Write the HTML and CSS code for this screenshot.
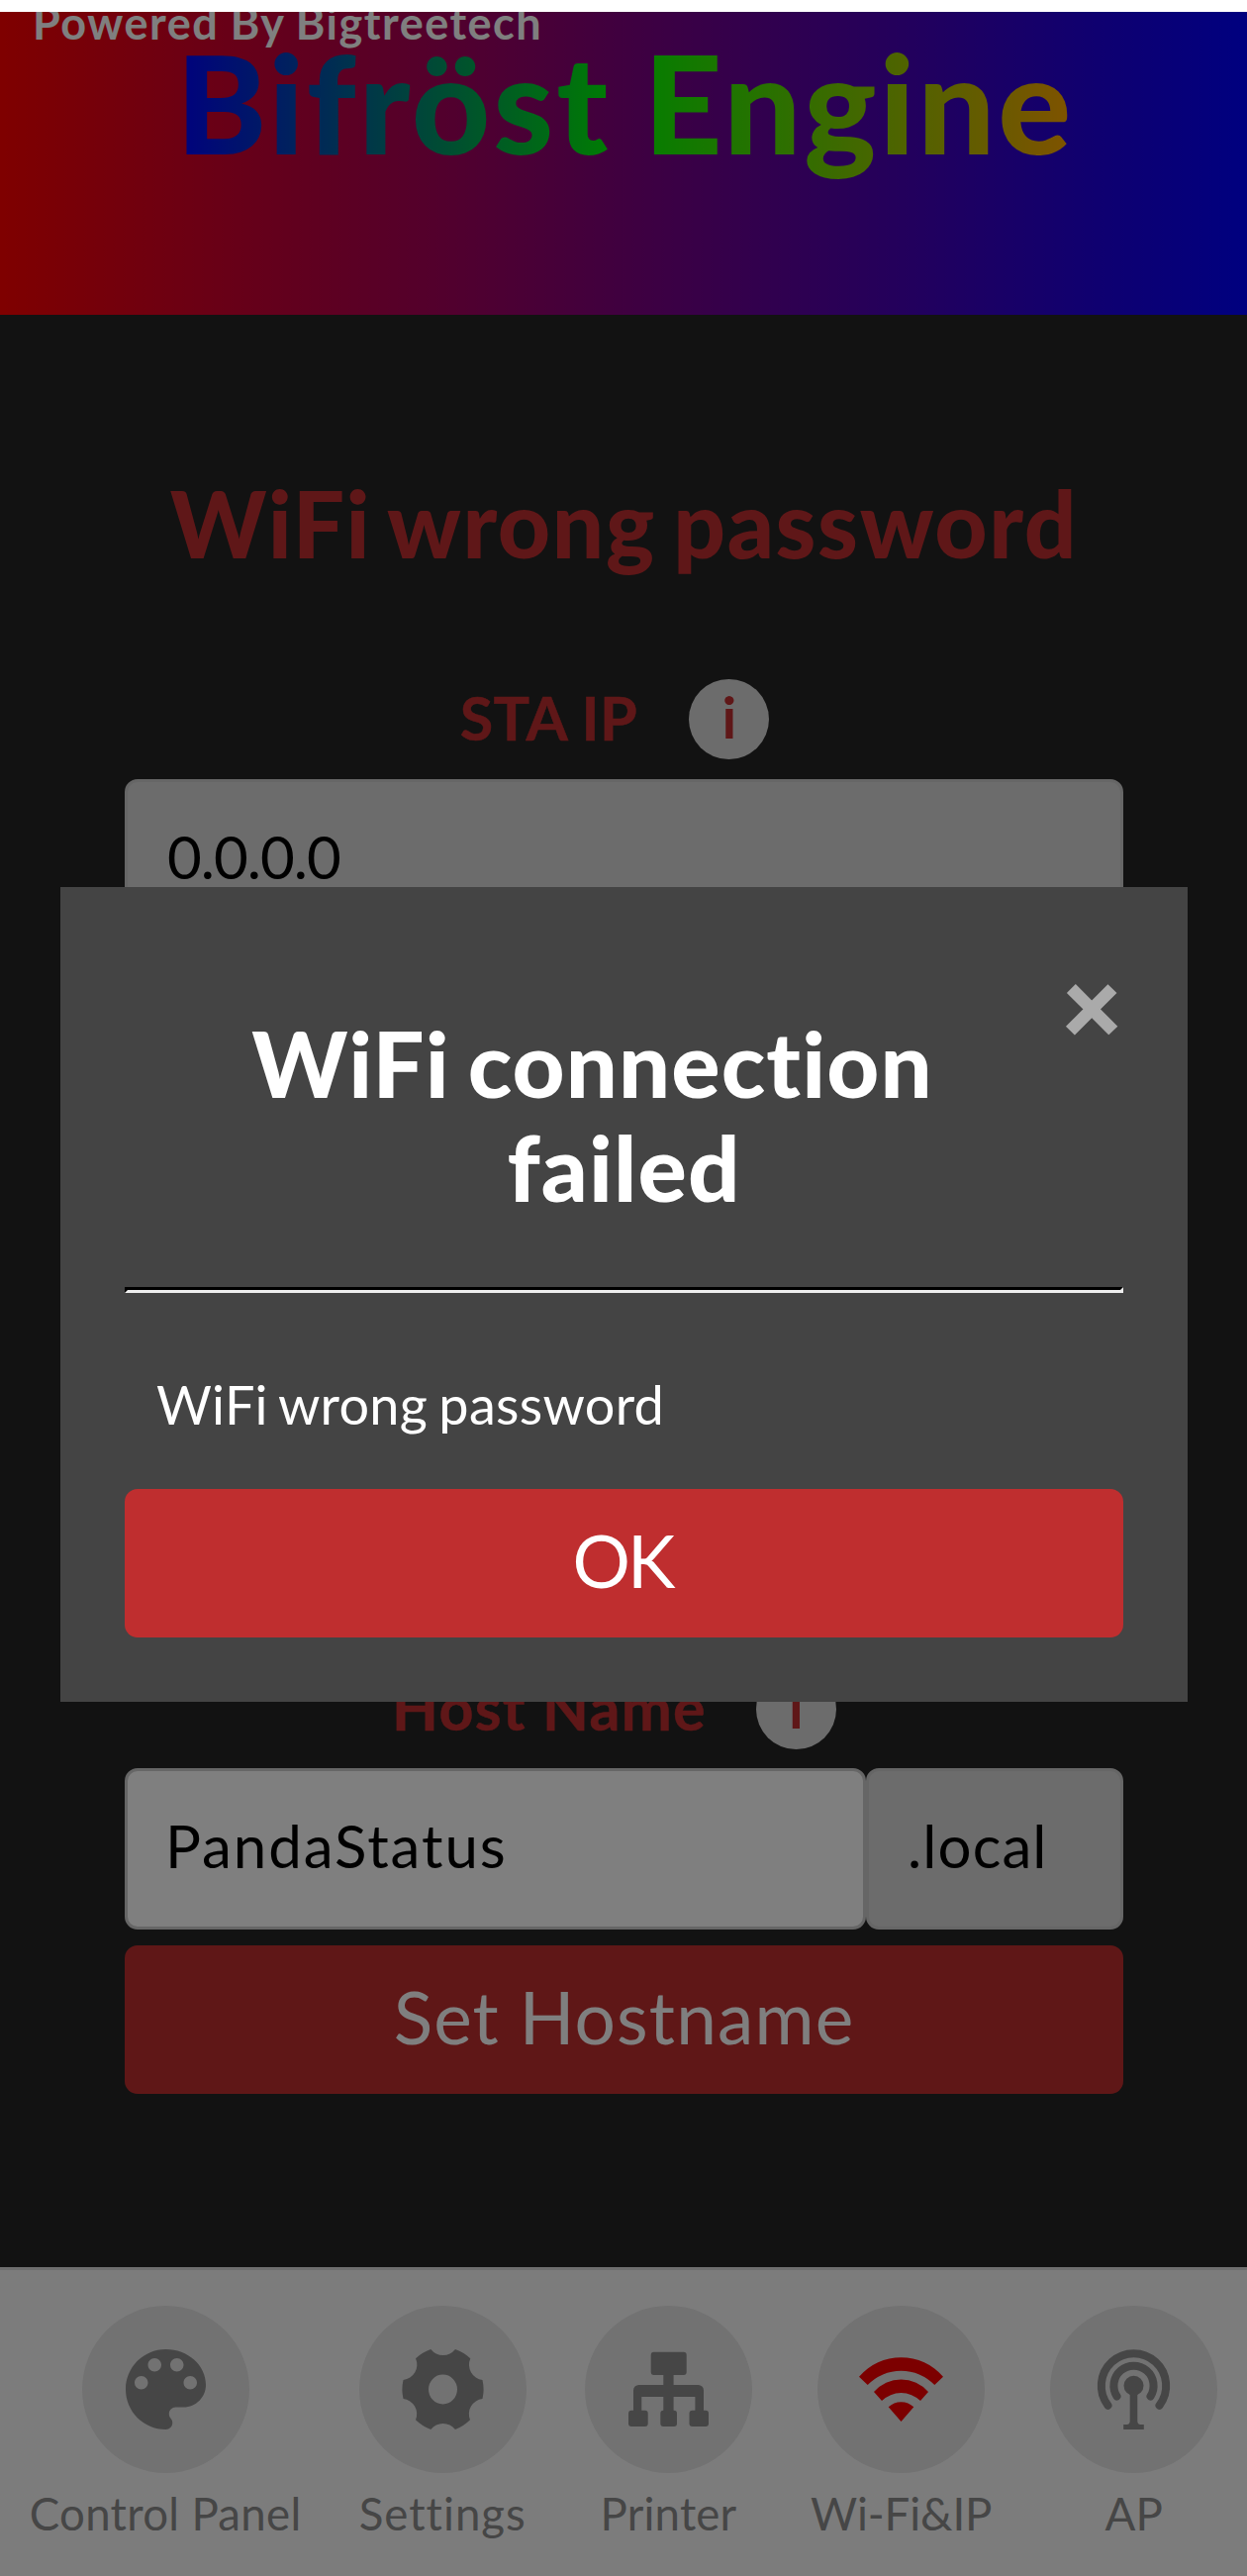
FILE: index.html
```
<!DOCTYPE html>
<html lang="en">
<head>
<meta charset="utf-8">
<title>Wi-Fi &amp; IP</title>
<link rel="stylesheet" href="styles.css">
</head>
<body>
<header class="header">
  <div class="powered">Powered By Bigtreetech</div>
  <div class="brand">Bifröst Engine</div>
</header>
<main class="main">
  <h1 class="status">WiFi wrong password</h1>
  <div class="label-row"><span class="label">STA IP</span><span class="info">i</span></div>
  <div class="field field-ip">0.0.0.0</div>
  <div class="label-row host-row"><span class="label label-host">Host Name</span><span class="info">i</span></div>
  <div class="host-fields">
    <div class="field field-name">PandaStatus</div>
    <div class="field field-suffix">.local</div>
  </div>
  <button class="btn btn-host">Set Hostname</button>
</main>
<nav class="nav">
  <a class="nav-item nav-panel">
    <span class="nav-circle"><svg class="icon" viewBox="3 3 18 18"><path fill-rule="evenodd" d="M12 3c-4.97 0-9 4.03-9 9s4.03 9 9 9c.83 0 1.5-.67 1.5-1.5 0-.39-.15-.74-.39-1.01-.23-.26-.38-.61-.38-.99 0-.83.67-1.5 1.5-1.5H16c2.76 0 5-2.24 5-5 0-4.42-4.03-8-9-8zm-5.5 9c-.83 0-1.5-.67-1.5-1.5S5.670 9 6.500 9 8 9.670 8 10.500 7.330 12 6.500 12zm3-4C8.670 8 8 7.330 8 6.500S8.670 5 9.500 5s1.500.67 1.500 1.500S10.330 8 9.500 8zm5 0c-.83 0-1.500-.67-1.500-1.500S13.670 5 14.500 5s1.500.67 1.500 1.500S15.330 8 14.500 8zm3 4c-.83 0-1.500-.67-1.500-1.500S16.670 9 17.500 9s1.500.67 1.500 1.500-.67 1.500-1.500 1.500z"/></svg></span>
    <span class="nav-text">Control Panel</span>
  </a>
  <a class="nav-item nav-settings">
    <span class="nav-circle"><svg class="icon" viewBox="0 0 81 81"><path fill-rule="evenodd" d="M28.300 0A15.700 15.700 0 0 0 53 0A42 42 0 0 1 68.300 9.300A15.500 15.500 0 0 0 80.500 31A42 42 0 0 1 80.500 50A15.500 15.500 0 0 0 68 71.300A42 42 0 0 1 53 81A15.700 15.700 0 0 0 28.300 81A42 42 0 0 1 13 71.300A15.500 15.500 0 0 0 .5 50A42 42 0 0 1 .5 31A15.500 15.500 0 0 0 13 9.300A42 42 0 0 1 28.300 0ZM40.500 25.500a14.500 15 0 1 0 0 30a14.500 15 0 1 0 0-30Z"/></svg></span>
    <span class="nav-text">Settings</span>
  </a>
  <a class="nav-item">
    <span class="nav-circle"><svg class="icon" viewBox="0 0 81 81"><rect x="22.700" y="2.700" width="36" height="23.300" rx="3"/><rect x="35.300" y="25" width="10.300" height="38"/><path d="M5 63V41.500a5.500 5.500 0 0 1 5.500-5.500h60a5.500 5.500 0 0 1 5.500 5.500V63h-8.600V48H13.300v15Z"/><rect y="61.700" width="19.700" height="16.300" rx="3"/><rect x="32.300" y="61.700" width="16.700" height="16.300" rx="3"/><rect x="61.500" y="61.700" width="19.500" height="16.300" rx="3"/></svg></span>
    <span class="nav-text">Printer</span>
  </a>
  <a class="nav-item nav-wifi">
    <span class="nav-circle"><svg class="icon icon-active" viewBox="0 0 81 81"><path d="M-2 27.700A56 56 0 0 1 83 27.700L74.300 36A47 47 0 0 0 6.700 36ZM13 43A36.500 36.500 0 0 1 68 43L60 52A28 28 0 0 0 21 52ZM27.700 58.300A18.500 18.500 0 0 1 53.300 58.300L40.500 73Z"/></svg></span>
    <span class="nav-text">Wi-Fi&amp;IP</span>
  </a>
  <a class="nav-item">
    <span class="nav-circle"><svg class="icon" viewBox="0 0 81 81"><g class="waves"><path d="M14.500 56.700A32.700 32.700 0 1 1 66.500 56.700"/><path d="M23.500 47.500A20.100 20.100 0 1 1 57.500 47.500"/></g><circle cx="40.500" cy="36.700" r="10"/><path d="M36.700 40h7.600v33q.4 3 3 3h3.500v5H30.200v-5h3.500q2.600 0 3-3Z"/></svg></span>
    <span class="nav-text">AP</span>
  </a>
</nav>
<div class="overlay">
  <section class="modal">
    <span class="close">×</span>
    <h2 class="modal-title">WiFi connection<br>failed</h2>
    <hr class="rule">
    <p class="modal-text">WiFi wrong password</p>
    <button class="btn btn-ok">OK</button>
  </section>
</div>
</body>
</html>
```
FILE: styles.css
```
* { box-sizing: border-box; }
body {
  margin: 0;
  padding-top: 12px;
  height: 2602px;
  position: relative;
  overflow: hidden;
  display: flex;
  flex-direction: column;
  background: #fff;
  font-family: Lato, "Open Sans", sans-serif;
  font-variant-ligatures: none;
}
.header {
  height: 306px;
  flex: none;
  overflow: hidden;
  text-align: center;
  background: linear-gradient(to right, #f00, #00f);
}
.powered {
  padding-left: 33px;
  text-align: left;
  color: #fff;
  font: 700 45px/22px Lato, sans-serif;
  letter-spacing: 1.5px;
  word-spacing: -1px;
}
.brand {
  display: inline-block;
  padding: 1px 0 40px 3px;
  font: 900 138px/135px Lato, sans-serif;
  letter-spacing: 2.8px;
  word-spacing: -2px;
  color: transparent;
  background: linear-gradient(to right, #00f, #0f0 50%, #ffa500);
  -webkit-background-clip: text;
  background-clip: text;
}
.main {
  flex: 1;
  padding: 156px 125px 0 126px;
  background: #242424;
}
.status {
  margin: 0 0 102px;
  text-align: center;
  white-space: nowrap;
  color: #bf2f30;
  font-size: 92.5px;
  font-weight: 900;
  line-height: 110px;
  letter-spacing: 1.6px;
  word-spacing: -6px;
}
.label-row {
  display: flex;
  justify-content: center;
  align-items: center;
  gap: 52px;
  height: 81px;
  margin-bottom: 20px;
  padding-right: 19px;
  color: #bf2f30;
  font-weight: 700;
}
.host-row { margin-top: 736px; margin-bottom: 19px; padding-right: 20px; gap: 50px; }
.label { padding-bottom: 5px; font-size: 61px; letter-spacing: .5px; -webkit-text-stroke: .5px; }
.label-host { letter-spacing: 1.29px; }
.info {
  width: 81px;
  height: 81px;
  padding-bottom: 6px;
  border-radius: 50%;
  background: #d9d9d9;
  text-align: center;
  font-size: 58px;
  line-height: 75px;
}
.field {
  height: 163px;
  border: 3px solid #ccc;
  border-radius: 13px;
  background: #d8d8d8;
  color: #000;
  font-size: 60px;
  line-height: 151px;
}
.field-ip { padding-left: 40px; letter-spacing: -1px; }
.host-fields { display: flex; margin-bottom: 16px; }
.field-name { width: 749px; padding-left: 38px; background: #fff; letter-spacing: 1.95px; }
.field-suffix { flex: 1; padding-left: 39px; letter-spacing: 1.1px; }
.btn {
  display: block;
  width: 100%;
  height: 150px;
  padding: 0 0 5px;
  border: 0;
  border-radius: 13px;
  background: #bf2e2f;
  color: #fff;
  font: 400 73px/145px Lato, sans-serif;
}
.btn-host { letter-spacing: 1.15px; }
.btn-ok { padding-right: 3px; letter-spacing: -3px; }
.nav {
  flex: none;
  display: flex;
  justify-content: space-around;
  height: 312px;
  padding: 36px 0 0 1px;
  border-top: 3px solid #dcdcdc;
  background: #f9f9f9;
}
.nav-item {
  display: flex;
  flex-direction: column;
  align-items: center;
  gap: 13px;
  width: 169px;
  color: #8c8c8c;
  font-size: 45.6px;
  line-height: 55px;
  letter-spacing: .2px;
}
.nav-panel { width: 273px; letter-spacing: .3px; }
.nav-settings { letter-spacing: 1px; }
.nav-wifi { width: 183px; letter-spacing: -.1px; }
.nav-text { white-space: nowrap; }
.nav-circle {
  display: flex;
  align-items: center;
  justify-content: center;
  width: 169px;
  height: 169px;
  border-radius: 50%;
  background: #e4e4e4;
}
.icon { width: 81px; height: 81px; overflow: visible; fill: #8c8c8c; }
.icon-active { fill: #f80000; }
.waves { fill: none; stroke: #8c8c8c; stroke-width: 8; stroke-linecap: round; }
.overlay {
  position: absolute;
  inset: 12px 0 0;
  background: rgba(0, 0, 0, .5);
}
.modal {
  width: 1139px;
  height: 823px;
  margin: 884px 0 0 61px;
  padding: 65px;
  background: #444;
  color: #fff;
}
.close {
  float: right;
  width: 64px;
  color: #aaa;
  text-align: center;
  font-size: 103px;
  font-weight: 900;
  line-height: 106px;
  -webkit-text-stroke: 2px;
}
.modal-title {
  margin: 0 0 69px;
  padding-top: 60px;
  text-align: center;
  font-size: 92px;
  font-weight: 900;
  line-height: 105px;
  letter-spacing: 1.1px;
  word-spacing: -5px;
}
.rule {
  height: 6px;
  margin: 0;
  border: 3px solid;
  border-color: #000 #eee #eee #000;
}
.modal-text {
  margin: 80px 0 53px;
  padding-left: 32px;
  font-size: 54px;
  line-height: 65px;
  letter-spacing: .3px;
  word-spacing: -3px;
}
```
